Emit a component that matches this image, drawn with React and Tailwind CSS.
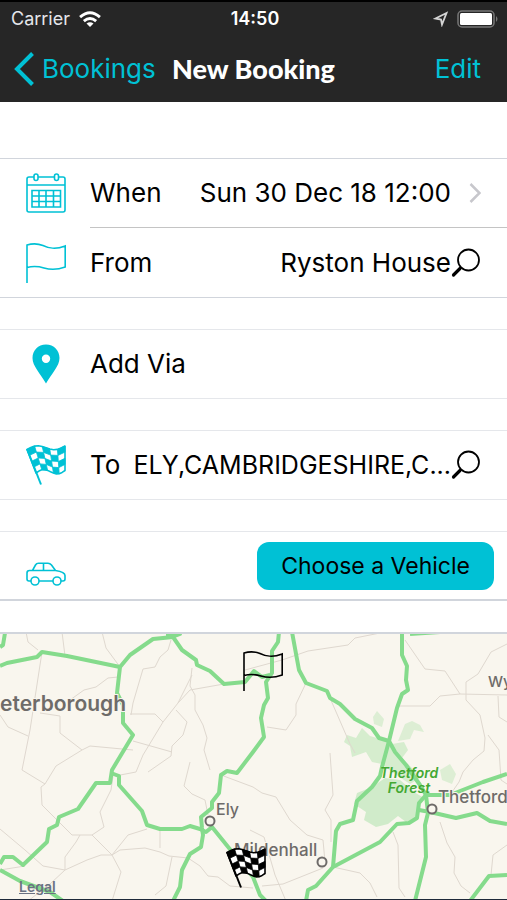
const FLAG_COLS = 5;
const FLAG_ROWS = 4;

// point on the waving cloth, u runs along the top edge and v down the pole
function clothPoint(u, v) {
  const left = 1 + v * 9;
  const x = left + (39 - left) * u;
  const top = 4.5 - u * 3.5 - Math.sin(u * Math.PI * 2) * 2.8;
  const y = top + v * (23.5 + u);
  return `${x.toFixed(1)},${y.toFixed(1)}`;
}

const flagCells = [];
for (let r = 0; r < FLAG_ROWS; r++) {
  for (let c = 0; c < FLAG_COLS; c++) {
    if ((r + c) % 2 === 1) continue;
    const u0 = c / FLAG_COLS;
    const u1 = (c + 1) / FLAG_COLS;
    const v0 = r / FLAG_ROWS;
    const v1 = (r + 1) / FLAG_ROWS;
    flagCells.push(
      [clothPoint(u0, v0), clothPoint(u1, v0), clothPoint(u1, v1), clothPoint(u0, v1)].join(" ")
    );
  }
}

const edgeSteps = [0, 0.1, 0.2, 0.3, 0.4, 0.5, 0.6, 0.7, 0.8, 0.9, 1];
const clothOutline = [
  ...edgeSteps.map((u) => clothPoint(u, 0)),
  ...edgeSteps.map((u) => clothPoint(1 - u, 1)),
].join(" ");

function CheckeredFlag({ className }) {
  return (
    <svg viewBox="0 0 40 40" className={className} fill="currentColor" aria-hidden="true">
      <polygon points={clothOutline} fill="white" stroke="currentColor" strokeWidth="1.6" strokeLinejoin="round" />
      {flagCells.map((points) => (
        <polygon key={points} points={points} stroke="currentColor" strokeWidth="0.8" />
      ))}
      <path d="M1 4 L15 39.500" stroke="currentColor" strokeWidth="2" />
    </svg>
  );
}

function OutlineFlag({ className }) {
  return (
    <svg viewBox="0 0 40 40" className={className} fill="none" stroke="currentColor" strokeWidth="1.6" aria-hidden="true">
      <path d="M1 40 V2 C6 0.5 12 0.5 17 2.5 C23 5.5 29 7 39.2 3 V24 C31 27 25 27 18 25 C13 23.5 7 23 1 24.5" />
    </svg>
  );
}

function CalendarIcon() {
  return (
    <svg viewBox="0 0 40 40" className="size-10" fill="none" stroke="currentColor" strokeWidth="1.6" aria-hidden="true">
      <path d="M8 4 H3 Q1 4 1 6 V37 Q1 39 3 39 H37 Q39 39 39 37 V6 Q39 4 37 4 H32.500 M12 4 H28 M1 12 H39" />
      <rect x="8" y="1" width="4" height="6.500" rx="2" />
      <rect x="28.500" y="1" width="4" height="6.500" rx="2" />
      <path d="M6 17.500 H34.500 V34 H6 Z M6 23 H34.500 M6 28.500 H34.500 M13 17.500 V34 M20 17.500 V34 M27.500 17.500 V34" />
    </svg>
  );
}

function PinIcon() {
  return (
    <svg viewBox="0 0 40 40" className="size-10" fill="currentColor" aria-hidden="true">
      <path fillRule="evenodd" d="M20 0.500 C12 0.500 6.500 6.500 6.500 14 C6.500 22 14 29 20 39.500 C26 29 33.500 22 33.500 14 C33.500 6.500 28 0.500 20 0.500 Z M20 10.500 A4.200 4.200 0 1 1 20 18.900 A4.200 4.200 0 1 1 20 10.500 Z" />
    </svg>
  );
}

function CarIcon() {
  return (
    <svg viewBox="0 0 40 24" className="h-6 w-10" fill="none" stroke="currentColor" strokeWidth="1.600" aria-hidden="true">
      <path d="M5 19 H3 Q1 19 1 17 V11 Q1 8.500 3.500 8.500 H6.500 L9.500 3 Q10.500 1.200 12.500 1.200 H22 Q24 1.200 25.500 3 L29.500 8.500 Q39 10 39 13.500 V17 Q39 19 37 19 H35 M13 19 H27 M6.500 8.500 H29.500 M17.500 1.200 V8.500" />
      <circle cx="9" cy="19" r="4" />
      <circle cx="31" cy="19" r="4" />
    </svg>
  );
}

function SearchIcon() {
  return (
    <svg viewBox="0 0 30 30" className="size-[30px] shrink-0" fill="none" stroke="black" aria-hidden="true">
      <circle cx="17.500" cy="12" r="10.500" strokeWidth="1.800" />
      <path d="M10 19.500 L7.500 22" strokeWidth="1.800" />
      <path d="M9 20.500 L2.500 27" strokeWidth="3.200" strokeLinecap="round" />
    </svg>
  );
}

function StatusBar() {
  return (
    <div className="grid h-9 grid-cols-3 items-center border-t-2 border-black pr-2 pl-[11px] text-lg leading-6 text-white">
      <div className="flex items-center gap-2">
        <span className="text-gray-200">Carrier</span>
        <svg viewBox="0 0 24 18" className="h-[17px] w-6" fill="none" stroke="white" strokeWidth="3" aria-hidden="true">
          <path d="M1.500 6.500 Q12 -3 22.500 6.500 M5.500 10.700 Q12 5 18.500 10.700" />
          <path d="M12 17 L8.300 13.300 Q12 10.500 15.700 13.300 Z" fill="white" stroke="none" />
        </svg>
      </div>
      <span className="text-center font-semibold">14:50</span>
      <div className="flex items-center justify-end gap-2">
        <svg viewBox="0 0 16 16" className="size-4" fill="none" stroke="#d4d4d4" strokeWidth="1.800" aria-hidden="true">
          <path d="M13.500 2 L2.500 7.500 L8 8.500 L9 13.500 Z" />
        </svg>
        <svg viewBox="0 0 42 18" className="h-[18px] w-[42px]" aria-hidden="true">
          <rect x="1" y="1" width="36" height="16" rx="4" fill="none" stroke="#777" strokeWidth="1.500" />
          <rect x="3" y="3" width="32" height="12" rx="1.500" fill="white" />
          <path d="M39 6 Q42 9 39 12 Z" fill="#777" />
        </svg>
      </div>
    </div>
  );
}

function NavBar() {
  return (
    <nav className="grid h-[66px] grid-cols-[1fr_auto_1fr] items-center px-[14px] text-[26px] leading-8">
      <button className="flex items-center gap-2 text-[#00c1d5]">
        <svg viewBox="0 0 20 34" className="h-[34px] w-5" fill="none" stroke="currentColor" strokeWidth="4" aria-hidden="true">
          <path d="M18.500 1.500 L3 17 L18.500 32.500" />
        </svg>
        Bookings
      </button>
      <h1 className="font-['Lato'] text-[27px] font-black text-white">New Booking</h1>
      <button className="mr-3 justify-self-end text-[#00c1d5]">Edit</button>
    </nav>
  );
}

function Row({ icon, label, value, trailing, className = "h-[68px]", valueClassName = "" }) {
  return (
    <button className={"flex w-full items-center bg-white text-left " + className}>
      <span className="flex w-[90px] shrink-0 pl-[26px] text-[#00c1d5]">{icon}</span>
      <span className="flex min-w-0 flex-1 items-center pr-[26px]">
        <span className="shrink-0">{label}</span>
        <span className={"min-w-0 flex-1 truncate pl-2 text-right " + valueClassName}>{value}</span>
        {trailing}
      </span>
    </button>
  );
}

const greenRoads = [
  "M0 666 L7 663 L37 657 L42 652 L67 656 L120 667",
  "M120 667 L130 655 L153 639 L173 637 L182 650 L196 660 L197 665 L210 671 L224 684 L245 682 L254 671 L262 677 L270 675",
  "M166 634 L180 634 L172 637",
  "M120 667 L117 693 L123 705 L123 723 L133 735 L112 770 L110 783 L96 783 L78 809 L59 817 L57 825 L49 829 L47 842 L23 865 L13 857 L4 857 L0 864",
  "M111 773 L119 776 L119 785 L142 811 L147 825 L160 829 L182 829 L190 826 L200 829 L206 832 L212 827 L233 853 L253 877 L260 895 L266 901",
  "M5 633 L3 645 L0 647",
  "M0 870 L20 881 L50 892 L63 901",
  "M279 632 L278 642 L272 651 L272 673 L266 682 L268 698 L264 705 L261 718 L264 737 L253 752 L237 773 L227 771 L221 775 L219 793 L212 802 L212 808 L201 817 L202 828 L203 835 L201 847 L190 854 L182 870 L180 887 L173 901",
  "M292 632 L299 670 L306 683 L327 691 L330 698 L340 704 L355 719 L372 728 L379 738 L389 741 L395 752 L406 765 L420 785 L426 795",
  "M402 632 L402 655 L407 666 L406 680 L408 690 L402 694 L397 708 L389 741 L382 767 L380 776 L372 787 L357 801 L353 820 L340 824 L336 831 L333 867",
  "M426 795 L419 803 L417 818 L409 823 L397 824 L380 842 L333 867 L316 886 L308 890 L306 901",
  "M419 810 L430 812 L456 818 L477 813 L490 821 L507 824",
  "M426 795 L428 813 L425 825 L426 857 L415 901",
  "M426 795 L450 795 L483 782 L507 774",
  "M470 901 L489 876 L507 875",
  "M410 634 L440 632",
];

const minorRoads = [
  "M42 652 L30 730 L22 770",
  "M70 700 L84 690 L96 687 L108 678 L118 677",
  "M26 632 L28 642 L38 650 M62 632 L65 656 M102 632 L106 648 L120 667",
  "M0 715 L8 727 L28 736",
  "M40 713 L60 716 L60 733 L82 750 L90 746 L133 750",
  "M82 750 L56 766 L45 784 L22 770 M45 784 L41 787 L42 805 L57 820 L72 835 L92 835 L104 827 L100 812 L111 790 L113 776",
  "M130 714 L155 714 L163 722 M133 741 L172 752 M131 715 L133 703 L143 669 L155 667 L160 657 L168 650 L171 640",
  "M192 675 L178 703 L163 722 L143 755 L136 772 L115 776",
  "M192 668 L190 686 L195 695 L195 710 L203 725 L207 738 L204 750 L210 770",
  "M178 703 L190 690 L224 684 M176 710 L187 722 L183 735 L172 746 L171 756 L148 772",
  "M245 670 L282 660 L308 651 L348 645 L355 638 L385 632",
  "M306 683 L296 704 L296 715 L286 730 L267 727",
  "M330 698 L350 744 L355 753",
  "M405 640 L425 669 L445 671 L460 694 M397 706 L430 706 L440 696 L460 694 L507 695",
  "M507 644 L491 652 L478 674 L466 682 L466 700 L480 715 L485 738 L484 751 L473 760 L463 772 L459 782 L450 795",
  "M498 696 L499 717 L507 722 M488 735 L499 750 L501 780 L507 784",
  "M0 829 L25 850 L43 866 L65 870 L87 860 L101 855 L112 855 L120 850 L145 848 L160 852 L169 856 L188 858 L200 866 L208 876 L218 877 L230 886 L253 888",
  "M0 870 L25 866 M65 870 L65 857 L76 842 L80 835 M92 835 L112 855 L121 872 L112 901 M112 855 L128 835 L147 829 M160 829 L160 848",
  "M65 870 L50 884 L28 901 M172 857 L166 886 L155 895",
  "M190 762 L184 786 L192 794 L205 800 L208 815",
  "M221 775 L253 787 M253 787 L262 793 L276 797 L290 820 L307 835 L323 840 L325 862",
  "M250 830 L264 837 L275 875 L286 901 M262 886 L283 884 L323 868 M333 867 L360 873 L370 883 L377 897",
  "M330 753 L333 795 L325 810 L331 820 L331 842",
  "M393 832 L398 845 L399 888 L405 897",
  "M440 822 L447 843 L455 857 L454 873 L461 886 L470 893 M507 845 L493 855 L491 875",
];

const places = [
  { name: "eterborough", x: 0, y: 711, size: 21, weight: 600 },
  { name: "Wy", x: 488, y: 687, size: 15, weight: 500 },
  { name: "Ely", x: 216, y: 815, size: 16, weight: 500 },
  { name: "Thetford", x: 438, y: 803, size: 17, weight: 500 },
  { name: "Mildenhall", x: 234, y: 856, size: 17, weight: 500 },
];

const towns = [
  [210, 821],
  [432, 809],
  [322, 862],
];

function RouteMap() {
  return (
    <section
      aria-label="Route map"
      className="relative min-h-[267px] flex-1 overflow-hidden border-t-2 border-b border-t-gray-300 border-b-gray-800 bg-[#f9f6ee]"
    >
      <svg viewBox="0 634 507 265" preserveAspectRatio="xMidYMin slice" className="block w-full" fill="none">
        <g fill="#c9e9c3">
          <path opacity="0.85" d="M357 793 L372 787 L385 778 L400 780 L414 792 L424 798 L418 806 L419 817 L406 822 L398 816 L388 824 L376 827 L364 820 L366 812 L354 804 Z" />
          <path opacity="0.75" d="M347 735 L356 738 L362 728 L370 736 L384 740 L392 744 L404 742 L408 750 L402 758 L412 768 L420 778 L410 784 L392 772 L382 764 L372 762 L366 752 L352 757 L350 746 L344 742 Z" />
          <path opacity="0.6" d="M373 717 L377 711 L384 719 L382 727 L374 724 Z M405 724 L412 721 L420 725 L424 732 L414 730 L410 739 L398 741 Z" />
          <path opacity="0.6" d="M440 770 L450 764 L456 774 L452 784 L442 780 Z" />
        </g>
        <g stroke="#dfd8cf" strokeWidth="1">
          {minorRoads.map((d) => (
            <path key={d} d={d} />
          ))}
        </g>
        <g stroke="#85db8c" strokeWidth="4" strokeLinejoin="round">
          {greenRoads.map((d) => (
            <path key={d} d={d} />
          ))}
        </g>
        <g fill="#f9f6ee" stroke="#6e6b69" strokeWidth="2">
          {towns.map(([cx, cy]) => (
            <circle key={cx} cx={cx} cy={cy} r="4.500" />
          ))}
        </g>
        <g fill="#6e6b69" stroke="#f9f6ee" strokeWidth="2" paintOrder="stroke">
          {places.map((p) => (
            <text key={p.name} x={p.x} y={p.y} fontSize={p.size} fontWeight={p.weight}>
              {p.name}
            </text>
          ))}
        </g>
        <g fill="#43a832" fontSize="14" fontStyle="italic" fontWeight="600" textAnchor="middle">
          <text x="409" y="778">Thetford</text>
          <text x="409" y="793">Forest</text>
        </g>
      </svg>
      <OutlineFlag className="absolute top-[17px] left-[243px] size-10 text-black" />
      <CheckeredFlag className="absolute top-[214px] left-[226px] size-10 text-black" />
      <a href="#legal" className="absolute bottom-1 left-[19px] text-[14px] leading-4 font-semibold text-gray-500 underline">
        Legal
      </a>
    </section>
  );
}

export default function App() {
  return (
    <div className="flex min-h-screen flex-col bg-white font-['Inter',sans-serif] text-black">
      <header className="bg-[#262626]">
        <StatusBar />
        <NavBar />
      </header>

      <main className="flex flex-1 flex-col gap-[31px] pt-[56px] text-[26px] leading-8">
        <section className="border-y border-gray-300">
          <Row
            icon={<CalendarIcon />}
            label="When"
            value="Sun 30 Dec 18 12:00"
            trailing={
              <svg viewBox="0 0 12 20" className="ml-[18px] h-5 w-3 shrink-0" fill="none" stroke="#c7c7cc" strokeWidth="2.500" aria-hidden="true">
                <path d="M1.500 1 L10.500 10 L1.500 19" />
              </svg>
            }
          />
          <div className="ml-[90px] border-t border-[#c4c4c4]" />
          <Row
            icon={<OutlineFlag className="size-10" />}
            label="From"
            value="Ryston House"
            trailing={<SearchIcon />}
            className="h-[69px]"
          />
        </section>

        <section className="border-y border-gray-200">
          <Row icon={<PinIcon />} label="Add Via" />
        </section>

        <section className="border-y border-gray-200">
          <Row
            icon={<CheckeredFlag className="size-10" />}
            label="To"
            value="ELY,CAMBRIDGESHIRE,C..."
            valueClassName="text-[25px]"
            trailing={<SearchIcon />}
          />
        </section>

        <section className="flex h-[70px] items-center justify-between border-t border-b-2 border-t-gray-200 border-b-gray-300 pr-[13px] pl-[26px]">
          <span className="pt-4 text-[#00c1d5]">
            <CarIcon />
          </span>
          <button className="h-12 rounded-xl bg-[#00c1d5] px-6 text-[23px]">Choose a Vehicle</button>
        </section>

        <RouteMap />
      </main>
    </div>
  );
}
